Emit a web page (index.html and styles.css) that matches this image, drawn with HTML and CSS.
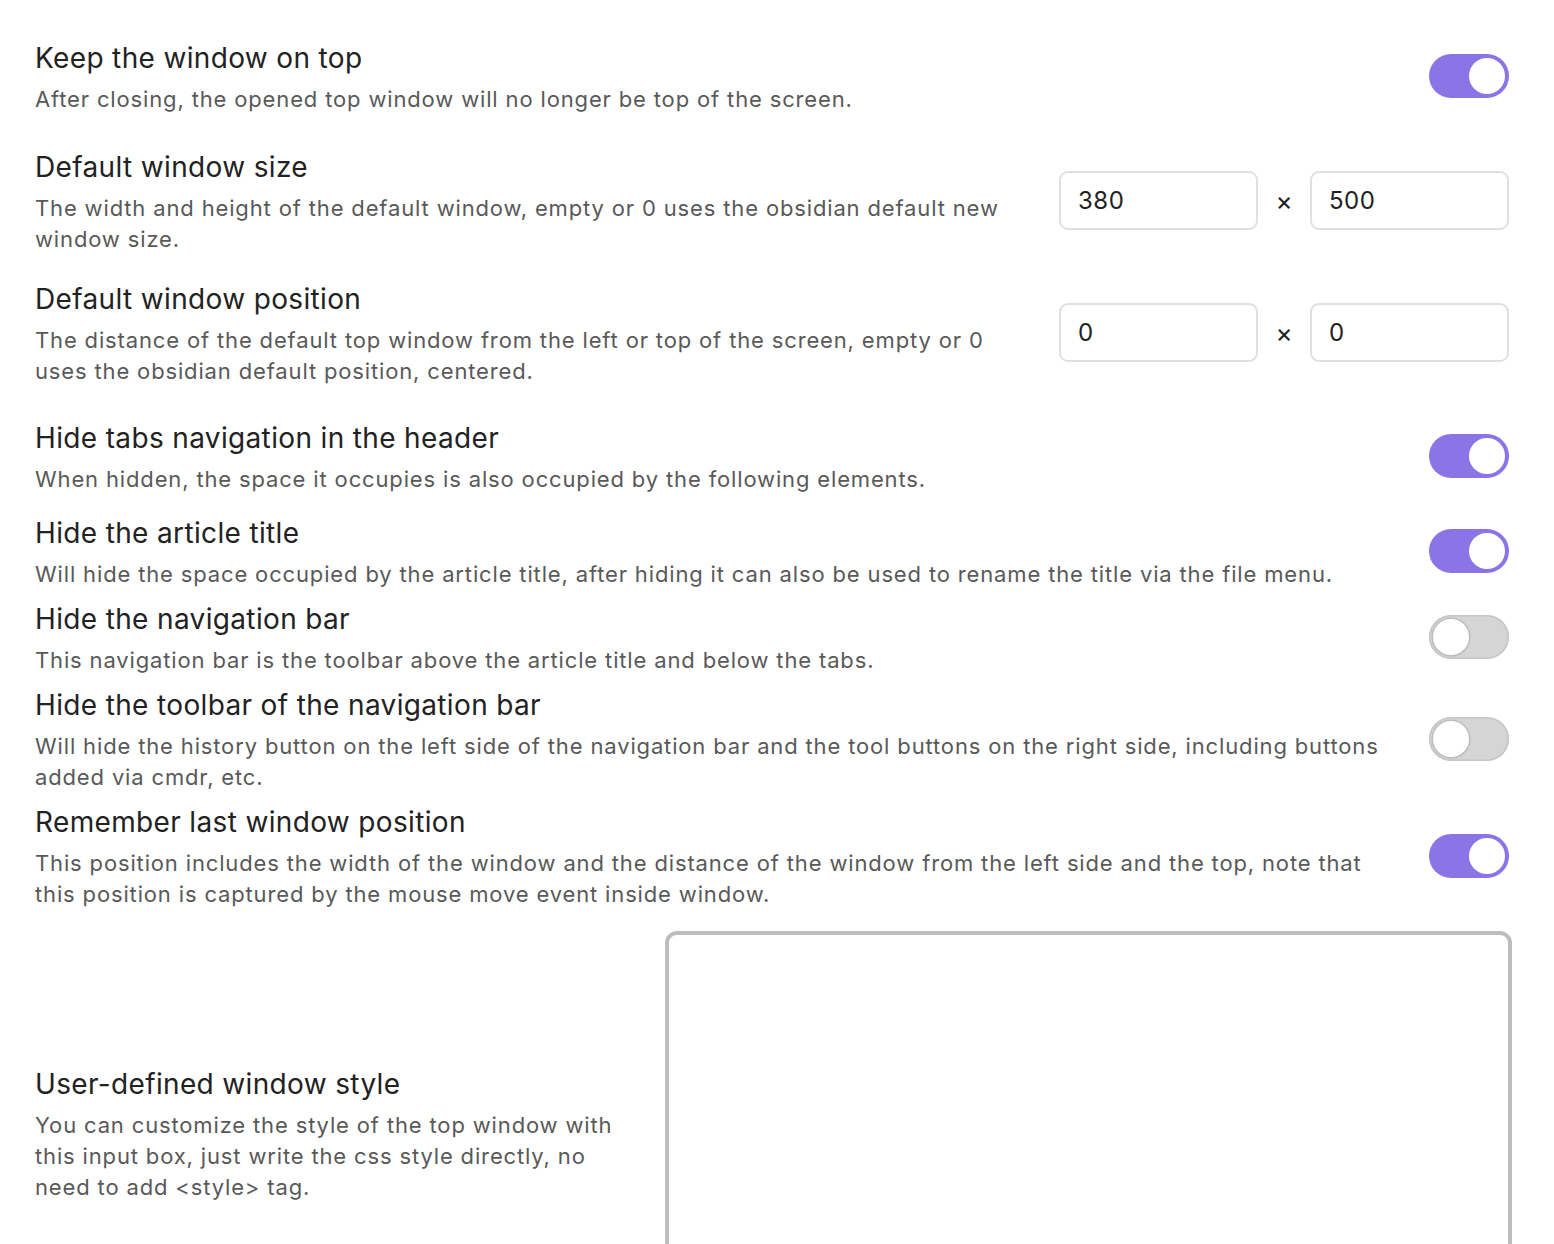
FILE: index.html
```html
<!DOCTYPE html>
<html>
<head>
<meta charset="utf-8">
<link rel="stylesheet" href="styles.css">
</head>
<body>
<div class="settings">
  <div class="item">
    <div class="info">
      <div class="name">Keep the window on top</div>
      <div class="desc">After closing, the opened top window will no longer be top of the screen.</div>
    </div>
    <div class="control"><div class="toggle on"></div></div>
  </div>

  <div class="item sp-2">
    <div class="info info-narrow">
      <div class="name">Default window size</div>
      <div class="desc">The width and height of the default window, empty or 0 uses the obsidian default new window size.</div>
    </div>
    <div class="control pair">
      <div class="text-input">380</div>
      <span class="times">×</span>
      <div class="text-input">500</div>
    </div>
  </div>

  <div class="item sp-3">
    <div class="info info-narrow">
      <div class="name">Default window position</div>
      <div class="desc">The distance of the default top window from the left or top of the screen, empty or 0 uses the obsidian default position, centered.</div>
    </div>
    <div class="control pair">
      <div class="text-input">0</div>
      <span class="times">×</span>
      <div class="text-input">0</div>
    </div>
  </div>

  <div class="item sp-4">
    <div class="info">
      <div class="name">Hide tabs navigation in the header</div>
      <div class="desc">When hidden, the space it occupies is also occupied by the following elements.</div>
    </div>
    <div class="control"><div class="toggle on"></div></div>
  </div>

  <div class="item sp-5">
    <div class="info">
      <div class="name">Hide the article title</div>
      <div class="desc">Will hide the space occupied by the article title, after hiding it can also be used to rename the title via the file menu.</div>
    </div>
    <div class="control"><div class="toggle on"></div></div>
  </div>

  <div class="item">
    <div class="info">
      <div class="name">Hide the navigation bar</div>
      <div class="desc">This navigation bar is the toolbar above the article title and below the tabs.</div>
    </div>
    <div class="control"><div class="toggle"></div></div>
  </div>

  <div class="item">
    <div class="info">
      <div class="name">Hide the toolbar of the navigation bar</div>
      <div class="desc">Will hide the history button on the left side of the navigation bar and the tool buttons on the right side, including buttons added via cmdr, etc.</div>
    </div>
    <div class="control"><div class="toggle"></div></div>
  </div>

  <div class="item">
    <div class="info">
      <div class="name">Remember last window position</div>
      <div class="desc">This position includes the width of the window and the distance of the window from the left side and the top, note that this position is captured by the mouse move event inside window.</div>
    </div>
    <div class="control"><div class="toggle on"></div></div>
  </div>

  <div class="item sp-9">
    <div class="info info-textarea">
      <div class="name">User-defined window style</div>
      <div class="desc">You can customize the style of the top window with this input box, just write the css style directly, no need to add &lt;style&gt; tag.</div>
    </div>
    <div class="control"><div class="textarea"></div></div>
  </div>
</div>
</body>
</html>
```

FILE: styles.css
```css
html, body {
  margin: 0;
  padding: 0;
  background: #ffffff;
  overflow: hidden;
}

body {
  font-family: Inter, "Noto Sans", "Liberation Sans", sans-serif;
  color: #222222;
}

.settings {
  padding: 40px 45px 0 35px;
  display: flex;
  flex-direction: column;
  gap: 11px;
}

.item {
  display: flex;
  align-items: center;
  justify-content: space-between;
}

.sp-2 { margin-top: 23px; }
.sp-3 { margin-top: 15px; }
.sp-4 { margin-top: 22px; }
.sp-5 { margin-top: 9px; }
.sp-9 { margin-top: 10px; }

.info {
  flex: 1 1 auto;
  max-width: 1372px;
  padding-right: 20px;
}

.info-narrow {
  max-width: 976px;
}

.info-textarea {
  max-width: 601px;
}

.name {
  font-size: 28px;
  line-height: 36px;
  letter-spacing: 0.35px;
  color: #222222;
}

.desc {
  margin-top: 8px;
  font-size: 22px;
  line-height: 31px;
  color: #595959;
  letter-spacing: 0.85px;
}

.control {
  flex: 0 0 auto;
  display: flex;
  align-items: center;
}

.item > .control > .toggle {
  margin-top: -3px;
}

.toggle {
  width: 80px;
  height: 44px;
  border-radius: 22px;
  background: #d5d5d5;
  box-shadow: inset 0 0 0 1.5px #c6c6c6;
  display: flex;
  align-items: center;
  justify-content: flex-start;
  padding: 0 4px;
  box-sizing: border-box;
}

.toggle::after {
  content: "";
  width: 36px;
  height: 36px;
  border-radius: 50%;
  background: #ffffff;
  box-shadow: 0 0 0 1.5px #bdbdbd, 0 1px 2px rgba(0,0,0,0.15);
}

.toggle.on {
  background: #8b75e6;
  box-shadow: none;
  justify-content: flex-end;
}

.toggle.on::after {
  box-shadow: none;
}

.pair {
  gap: 0;
  margin-top: -3px;
}

.text-input {
  width: 199px;
  height: 59px;
  box-sizing: border-box;
  border: 2px solid #e0e0e0;
  border-radius: 9px;
  padding: 0 17px;
  display: flex;
  align-items: center;
  font-size: 24px;
  letter-spacing: 0.5px;
  color: #222222;
}

.times {
  width: 52px;
  text-align: center;
  font-size: 26px;
  color: #222222;
}

.textarea {
  width: 847px;
  height: 407px;
  box-sizing: border-box;
  border: 4px solid #bdbdbd;
  border-radius: 12px;
  margin-right: -3px;
  background: #ffffff;
}
```
